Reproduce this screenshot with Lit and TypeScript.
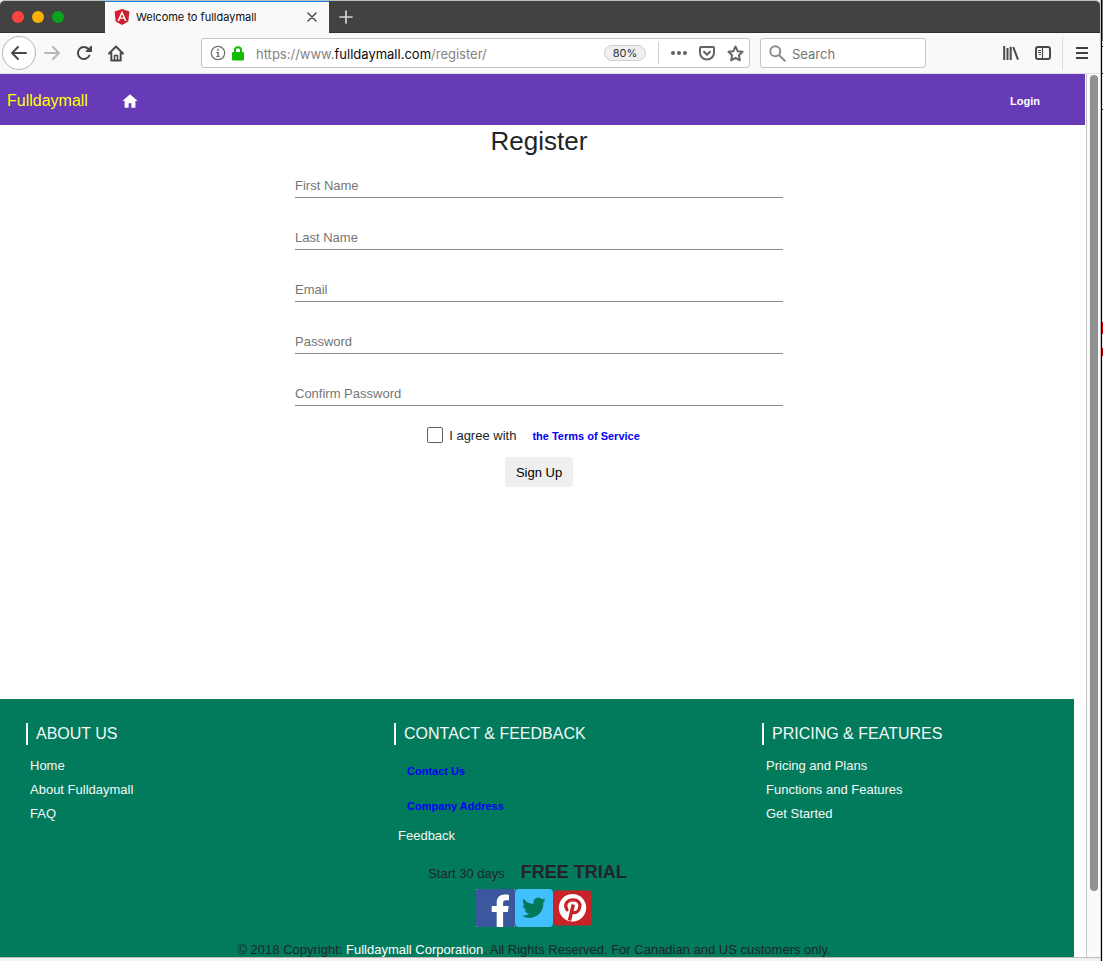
import { LitElement, html, css } from "lit";
import { customElement } from "lit/decorators.js";

const icons = {
  angular: html`<svg width="16" height="16" viewBox="0 0 16 16" aria-hidden="true">
    <path fill="#dd1b30" d="M8 0 .6 2.6l1.1 9.8L8 16z" /><path fill="#c0242c" d="M8 0v16l6.300-3.600L15.400 2.600z" />
    <path fill="#fff" d="M8 1.800 3.400 12.100h1.700l.9-2.300h4l.9 2.300h1.700zm0 3.300 1.400 3.300H6.600z" /></svg>`,
  close: html`<svg width="10" height="10" viewBox="0 0 10 10" fill="none" stroke="#4a4a4a" stroke-width="1.5" stroke-linecap="round"><path d="m1 1 8 8M9 1 1 9" /></svg>`,
  plus: html`<svg width="14" height="14" viewBox="0 0 14 14" stroke="#d6d6d6" stroke-width="1.700" stroke-linecap="round"><path d="M7 1v12M1 7h12" /></svg>`,
  back: html`<svg width="18" height="16" viewBox="0 0 18 16" fill="none" stroke="#4a4a4a" stroke-width="2" stroke-linecap="round" stroke-linejoin="round"><path d="M16 8H2M8 2 2 8l6 6" /></svg>`,
  forward: html`<svg width="18" height="16" viewBox="0 0 18 16" fill="none" stroke="#b8b8b8" stroke-width="2" stroke-linecap="round" stroke-linejoin="round"><path d="M2 8h14M10 2l6 6-6 6" /></svg>`,
  reload: html`<svg width="16" height="16" viewBox="0 0 16 16" fill="none" stroke="#4a4a4a" stroke-width="2" stroke-linecap="round"><path d="M13.300 10.600A6 6 0 1 1 12.400 4" /><path fill="#4a4a4a" stroke="none" d="M15 .8a.6.6 0 0 1 1 .4v5.200a.6.6 0 0 1-.6.6h-5.200a.6.6 0 0 1-.4-1z" /></svg>`,
  house: html`<svg width="16" height="17" viewBox="0 0 16 17" fill="none" stroke="#4a4a4a" stroke-width="2" stroke-linecap="round" stroke-linejoin="round"><path d="M1 8.500 8 1.500l7 7M3.300 8v7.500h9.400V8" /><path stroke-width="1.500" stroke-linecap="butt" d="M6.500 15v-4.500h3V15" /></svg>`,
  info: html`<svg width="16" height="16" viewBox="0 0 16 16"><circle cx="8" cy="8" r="6.700" fill="none" stroke="#6d6d6d" stroke-width="1.200" /><circle cx="8" cy="4.700" r="1" fill="#6d6d6d" /><path fill="#6d6d6d" d="M6.300 6.900h2.500v4h1v1H6.300v-1h1v-3h-1z" /></svg>`,
  lock: html`<svg width="12" height="15" viewBox="0 0 12 15"><path fill="none" stroke="#12bc00" stroke-width="2" d="M3 7V4.200a3 3 0 0 1 6 0V7" /><rect y="6" width="12" height="8.500" rx="1" fill="#12bc00" /></svg>`,
  dots: html`<svg width="16" height="4" viewBox="0 0 16 4" fill="#636363"><circle cx="2" cy="2" r="2" /><circle cx="8" cy="2" r="2" /><circle cx="14" cy="2" r="2" /></svg>`,
  pocket: html`<svg width="16" height="15" viewBox="0 0 16 15" fill="none" stroke="#636363" stroke-width="2" stroke-linecap="round" stroke-linejoin="round"><path d="M2 1h12a1 1 0 0 1 1 1v4.500a7 7 0 0 1-14 0V2a1 1 0 0 1 1-1z" /><path d="m5 5.800 3 2.900 3-2.900" /></svg>`,
  star: html`<svg width="17" height="17" viewBox="0 0 17 17" fill="none" stroke="#636363" stroke-width="1.900" stroke-linejoin="round"><path d="m8.500 1.500 2.100 4.700 5 .6-3.700 3.500 1 5-4.400-2.500-4.400 2.500 1-5L1.400 6.800l5-.6z" /></svg>`,
  search: html`<svg width="17" height="17" viewBox="0 0 17 17" fill="none" stroke="#8c8c8c" stroke-width="2" stroke-linecap="round"><circle cx="6.300" cy="6.300" r="5" /><path d="m10 10 5.800 5.800" /></svg>`,
  library: html`<svg width="16" height="14" viewBox="0 0 16 14" fill="none" stroke="#4a4a4a" stroke-width="2"><path d="M1.200 0v14M4.500 2v12M7.700 0.800v13.200M10.200 1 15 13.600" /></svg>`,
  sidebar: html`<svg width="16" height="14" viewBox="0 0 16 14" fill="none" stroke="#4a4a4a"><rect x="1" y="1" width="14" height="12" rx="2" stroke-width="2" /><path d="M7.500 2v10" stroke-width="1.200" /><path d="M3 4.500h3M3 6.500h3M4 8.500h2" stroke-width="1" /></svg>`,
  menu: html`<svg width="12" height="12" viewBox="0 0 12 12" fill="#3f3f3f"><rect width="12" height="2" rx=".5" /><rect y="5" width="12" height="2" rx=".5" /><rect y="10" width="12" height="2" rx=".5" /></svg>`,
  siteHome: html`<svg width="16" height="14" viewBox="0 0 16 14" fill="#fff"><path d="M8 .3 15.600 7H13.400v6.700H9.400V9.200H6.600v4.500h-4V7H.4z" /></svg>`,
  facebook: html`<svg width="39" height="38" viewBox="0 0 39 38"><path fill="#e8edf2" d="M0 0h39v38H0z" /><path fill="#3b579d" d="M1 0h37l1 1v36l-1 1H1l-1-1V1z" /><path fill="#fff" d="M20.700 38V23h-5v-6h5v-3.500C20.700 8.300 24 5.500 28.700 5.500c2 0 3.500.2 4.300.3v5.400h-3c-2.400 0-2.900 1.200-2.900 2.800v3h5.600l-.8 6h-4.800v15z" /></svg>`,
  twitter: html`<svg width="38" height="38" viewBox="0 0 38 38"><rect width="38" height="38" rx="4" fill="#41bfff" /><path fill="#04795a" transform="translate(5.500 4.600) scale(1.120 1.160)" d="M22.500 5.500c-.8.4-1.600.6-2.500.7.900-.5 1.600-1.400 1.900-2.400-.8.500-1.800.9-2.800 1.100A4.400 4.400 0 0 0 11.600 9C8 8.800 4.800 7.100 2.700 4.400a4.400 4.400 0 0 0 1.400 5.900c-.7 0-1.400-.2-2-.6 0 2.200 1.500 4 3.500 4.400-.6.200-1.300.2-2 .1.600 1.700 2.200 3 4.100 3A8.900 8.900 0 0 1 1.200 19a12.500 12.500 0 0 0 19.200-11.200c.8-.6 1.600-1.400 2.100-2.300z" /></svg>`,
  pinterest: html`<svg width="38" height="38" viewBox="0 0 38 38"><rect x="1" y="1.500" width="37" height="35" rx="2.500" fill="#cb2128" /><circle cx="19.500" cy="18.700" r="13.700" fill="#fff" /><path fill="none" stroke="#cb2128" stroke-width="3.200" stroke-linecap="round" d="M14 20.800c-3.300-5 0-9.900 6-9.900 5 0 7.500 3 6.800 6.800-.7 4.300-3.400 6.200-5.800 5.900-1.500-.2-2.200-1-2.500-1.800" /><path fill="none" stroke="#cb2128" stroke-width="3.400" d="M20.300 15.500 16.500 31.500" /></svg>`,
};

const socialIcons = [
  { name: "Facebook", icon: icons.facebook },
  { name: "Twitter", icon: icons.twitter },
  { name: "Pinterest", icon: icons.pinterest },
];

const resets = css`
  * { box-sizing: border-box; }
  svg { display: block; flex: none; }
  a { color: inherit; text-decoration: none; }
  button { border: 0; background: none; padding: 0; color: inherit; font: inherit; }
  input { border: 0; background: none; padding: 0; outline: 0; font: inherit; min-width: 0; }
  ul { list-style: none; margin: 0; padding: 0; }
`;

@customElement("browser-chrome")
export class BrowserChrome extends LitElement {
  static styles = [resets, css`
    :host { display: block; font-family: Inter, "Liberation Sans", sans-serif; }
    .tabs { display: flex; height: 33px; background: #424242; border-top: 1px solid #b9bfbd; border-radius: 5px 5px 0 0; overflow: hidden; box-shadow: inset 0 -1px #303030; }
    .lights { width: 105px; display: flex; align-items: center; gap: 8px; padding-left: 12px; }
    .light { width: 12px; height: 12px; border-radius: 50%; }
    .red { background: #ff4240; }
    .amber { background: #f8b007; }
    .green { background: #08a21d; }
    .tab { display: flex; align-items: center; gap: 6px; width: 224px; padding: 0 12px 2px 9px; background: #f9f9fa; border-top: 1px solid #1483e8; font-size: 11px; color: #0c0c0d; }
    .title { flex: 1; white-space: nowrap; }
    .new { display: grid; place-items: center; width: 34px; }
    .bar { display: flex; align-items: center; height: 41px; padding: 0 2px; background: #f9f9fa; border-bottom: 1px solid #dedee0; }
    .tool { display: grid; place-items: center; width: 32px; height: 32px; }
    .round { width: 34px; height: 34px; background: #fff; border: 1px solid #b5b5b5; border-radius: 50%; }
    .field { display: flex; align-items: center; height: 30px; background: #fff; border: 1px solid #c3c3c5; border-radius: 3px; font-size: 13px; }
    .url { flex: 1; margin: 0 10px 0 69px; padding: 0 5px 0 8px; color: #838383; min-width: 0; }
    .lock { margin: 0 12px 0 6px; }
    .address { flex: 1; padding-top: 2px; white-space: nowrap; overflow: hidden; }
    .host { color: #0c0c0d; }
    .zoom { height: 16px; width: 42px; border: 1px solid #cfcfcf; border-radius: 8px; background: #efefef; color: #333; font-size: 11px; line-height: 14px; text-align: center; }
    .rule { width: 1px; height: 22px; background: #d4d4d4; margin: 0 12px; }
    .actions { display: flex; align-items: center; gap: 12px; }
    .search { width: 166px; gap: 6px; padding: 0 8px; margin-right: 69px; }
    .search input { flex: 1; padding-top: 2px; }
    .search input::placeholder { color: #757575; opacity: 1; }
    .divider { width: 1px; height: 33px; background: #dcdcde; margin: 0 3px; }
  `];

  render() {
    return html`
      <div class="tabs">
        <div class="lights"><span class="light red"></span><span class="light amber"></span><span class="light green"></span></div>
        <div class="tab">${icons.angular}<span class="title">Welcome to fulldaymall</span><button aria-label="Close tab">${icons.close}</button></div>
        <button class="new" aria-label="New tab">${icons.plus}</button>
      </div>
      <div class="bar">
        <button class="tool round" aria-label="Back">${icons.back}</button>
        <button class="tool" aria-label="Forward">${icons.forward}</button>
        <button class="tool" aria-label="Reload">${icons.reload}</button>
        <button class="tool" aria-label="Home">${icons.house}</button>
        <div class="field url">
          ${icons.info}<span class="lock">${icons.lock}</span>
          <span class="address">https://www.<span class="host">fulldaymall.com</span>/register/</span>
          <button class="zoom">80%</button>
          <span class="rule"></span>
          <div class="actions">
            <button aria-label="Page actions">${icons.dots}</button>
            <button aria-label="Save to Pocket">${icons.pocket}</button>
            <button aria-label="Bookmark">${icons.star}</button>
          </div>
        </div>
        <div class="field search">${icons.search}<input type="search" aria-label="Search" placeholder="Search" /></div>
        <button class="tool" aria-label="Library">${icons.library}</button>
        <button class="tool" aria-label="Sidebars">${icons.sidebar}</button>
        <span class="divider"></span>
        <button class="tool" aria-label="Menu">${icons.menu}</button>
      </div>`;
  }
}

@customElement("register-form")
export class RegisterForm extends LitElement {
  static styles = [resets, css`
    :host { display: block; padding-right: 7px; color: #212529; font-size: 13px; }
    h1 { margin: 0 0 16px; font-size: 26px; line-height: 32px; font-weight: 400; text-align: center; }
    form { display: flex; flex-direction: column; align-items: center; max-width: 488px; margin: 0 auto; }
    .text { width: 100%; height: 25px; margin-bottom: 27px; border-bottom: 1px solid #8a8a8a; }
    .text:last-of-type { margin-bottom: 0; }
    .text::placeholder { color: #757575; opacity: 1; }
    .fields { width: 100%; display: flex; flex-direction: column; }
    .agree { display: flex; align-items: center; height: 20px; margin: 19px 0 12px; padding-right: 11px; }
    .check { appearance: none; width: 16px; height: 16px; margin: 0 6px 0 0; background: #fff; border: 1px solid #5f5f5f; border-radius: 2px; }
    .terms { margin-left: 16px; padding-top: 2px; color: #0000f5; font-size: 11px; font-weight: 700; }
    .submit { height: 30px; padding: 0 11px; border-radius: 3px; background: #efefef; color: #000; }
  `];

  private fields = [
    { label: "First Name", type: "text" },
    { label: "Last Name", type: "text" },
    { label: "Email", type: "email" },
    { label: "Password", type: "password" },
    { label: "Confirm Password", type: "password" },
  ];

  render() {
    return html`
      <h1>Register</h1>
      <form>
        <div class="fields">
          ${this.fields.map((f) => html`<input class="text" type=${f.type} placeholder=${f.label} aria-label=${f.label} />`)}
        </div>
        <div class="agree">
          <input class="check" id="agree" type="checkbox" /><label for="agree">I agree with</label>
          <a class="terms" href="#terms">the Terms of Service</a>
        </div>
        <button class="submit" type="button">Sign Up</button>
      </form>`;
  }
}

@customElement("site-footer")
export class SiteFooter extends LitElement {
  static styles = [resets, css`
    :host { display: block; margin-right: 11px; padding-top: 24px; background: #027b5d; color: #212529; font-size: 13px; }
    .columns { display: grid; grid-template-columns: repeat(3, 1fr); gap: 56px; padding-left: 26px; color: #f4f8f6; }
    h2 { margin: 0 0 9px; padding-left: 8px; border-left: 2px solid #f4f8f6; font-size: 16px; line-height: 22px; font-weight: 400; white-space: nowrap; }
    ul { padding-left: 4px; }
    li { line-height: 24px; }
    .popup { padding-left: 9px; color: #0000f5; font-size: 11px; line-height: 35px; font-weight: 700; }
    .end { display: flex; flex-direction: column; align-items: center; padding-right: 6px; }
    .trial { display: flex; align-items: baseline; gap: 16px; margin-top: 12px; padding-right: 13px; line-height: 24px; }
    .trial strong { font-size: 18px; }
    .social { display: flex; margin: 3px 0 15px; padding-right: 1px; }
    .copy { margin: 0; line-height: 15px; text-align: center; }
    .copy a { color: #fff; }
  `];

  private columns = [
    { title: "ABOUT US", links: [{ text: "Home" }, { text: "About Fulldaymall" }, { text: "FAQ" }] },
    { title: "CONTACT & FEEDBACK", links: [{ text: "Contact Us", popup: true }, { text: "Company Address", popup: true }, { text: "Feedback" }] },
    { title: "PRICING & FEATURES", links: [{ text: "Pricing and Plans" }, { text: "Functions and Features" }, { text: "Get Started" }] },
  ] as { title: string; links: { text: string; popup?: boolean }[] }[];

  render() {
    return html`
      <div class="columns">
        ${this.columns.map((c) => html`<section><h2>${c.title}</h2><ul>
          ${c.links.map((l) => html`<li class=${l.popup ? "popup" : "plain"}><a href="#">${l.text}</a></li>`)}
        </ul></section>`)}
      </div>
      <div class="end">
        <div class="trial"><span>Start 30 days</span><strong>FREE TRIAL</strong></div>
        <div class="social">${socialIcons.map((s) => html`<a href="#" aria-label=${s.name}>${s.icon}</a>`)}</div>
        <p class="copy">© 2018 Copyright: <a href="#">Fulldaymall Corporation</a>. All Rights Reserved. For Canadian and US customers only.</p>
      </div>`;
  }
}

@customElement("app-root")
export class AppRoot extends LitElement {
  static styles = [resets, css`
    :host { display: flex; min-height: 100vh; background: #fff; font-family: "Liberation Sans", Arial, sans-serif; }
    .window { flex: 1; min-width: 0; display: flex; flex-direction: column; border-right: 1px solid #c4c4c4; background: #f1f1f1; }
    .edge { width: 2px; border-left: 1px solid #000; background: linear-gradient(#777 0 41px, #e4e4e4 41px 46px, #000 46px 47px, #e4e4e4 47px 73px, #000 73px 74px, #e4e4e4 74px 109px, #000 109px 110px, #e4e4e4 110px 322px, #d00000 322px 334px, #e4e4e4 334px 348px, #d00000 348px 356px, #e4e4e4 356px); }
    .view { flex: 1; display: flex; margin-bottom: 3px; border-bottom: 1px solid #bcbcbc; background: #fff; }
    .page { flex: 1; min-width: 0; display: flex; flex-direction: column; padding-right: 1px; }
    .nav { display: flex; align-items: center; gap: 34px; height: 51px; padding: 2px 45px 0 7px; background: #673ab7; color: #fff; }
    .brand { color: #ffff00; font-size: 16px; }
    .login { margin-left: auto; font-size: 11px; font-weight: 700; }
    .content { flex: 1; }
    .scroll { width: 14px; padding: 1px 2px 66px 3px; border-left: 1px solid #c4c4c4; background: #fafafa; display: flex; }
    .thumb { width: 8px; border-radius: 4px; background: #919191; }
  `];

  render() {
    return html`
      <div class="window">
        <browser-chrome></browser-chrome>
        <div class="view">
          <div class="page">
            <nav class="nav">
              <a class="brand" href="#">Fulldaymall</a>
              <a href="#" aria-label="Home">${icons.siteHome}</a>
              <a class="login" href="#">Login</a>
            </nav>
            <main class="content"><register-form></register-form></main>
            <site-footer></site-footer>
          </div>
          <div class="scroll"><div class="thumb"></div></div>
        </div>
      </div>
      <div class="edge"></div>`;
  }
}
